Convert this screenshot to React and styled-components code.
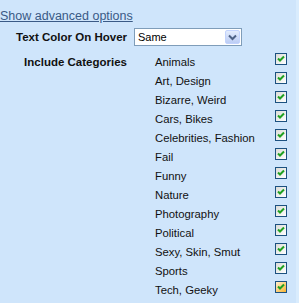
import React from 'react';
import styled, { createGlobalStyle } from 'styled-components';

const GlobalStyle = createGlobalStyle`
  html, body {
    margin: 0;
    padding: 0;
    background: #cfe5fb;
  }
  body {
    font-family: "Liberation Sans", Arial, sans-serif;
  }
`;

const Page = styled.div`
  width: 299px;
  height: 303px;
  background: #cfe5fb;
  border-right: 3px solid #d9ecfd;
  box-sizing: border-box;
  padding-top: 9px;
  overflow: hidden;
`;

const AdvancedLink = styled.a`
  display: block;
  width: fit-content;
  font-size: 12.5px;
  line-height: 14px;
  color: #3a5a86;
  text-decoration: underline;
  margin-bottom: 5px;
`;

const Form = styled.div`
  display: grid;
  grid-template-columns: 127px 1fr;
  column-gap: 7px;
  row-gap: 6px;
  align-items: start;
`;

const Label = styled.div`
  font-size: 11.5px;
  font-weight: bold;
  color: #111;
  text-align: right;
  line-height: 18px;
  padding-top: ${p => p.$top || 0}px;
`;

const Select = styled.div`
  width: 108px;
  height: 18px;
  box-sizing: border-box;
  border: 1px solid #7f9db9;
  background: #fff;
  display: flex;
  align-items: stretch;
`;

const SelectValue = styled.span`
  flex: 1;
  font-size: 11px;
  line-height: 16px;
  padding-left: 3px;
  color: #000;
`;

const SelectButton = styled.span`
  width: 15px;
  margin: 1px;
  border-radius: 2px;
  background: linear-gradient(#e3ecfd, #bccdf5);
  border: 1px solid #c3d3fd;
  box-sizing: border-box;
  display: flex;
  align-items: center;
  justify-content: center;
`;

const CategoryList = styled.div`
  display: flex;
  flex-direction: column;
  padding-left: 21px;
  padding-right: 9px;
`;

const CategoryRow = styled.label`
  display: flex;
  align-items: center;
  justify-content: space-between;
  height: 19px;
  font-size: 11.3px;
  color: #111;
`;

const Box = styled.span`
  width: 12px;
  height: 12px;
  margin-bottom: 6px;
  box-sizing: border-box;
  border: 1px solid #1c5180;
  background: ${p =>
    p.$hover
      ? 'linear-gradient(135deg, #fff0cf, #f8b330)'
      : 'linear-gradient(135deg, #dcdcd7, #ffffff)'};
  display: flex;
  align-items: center;
  justify-content: center;
`;

const Check = () => (
  <svg width="8" height="8" viewBox="0 0 8 8">
    <path d="M1 3.5 L3 5.5 L7 1.5" stroke="#21a121" strokeWidth="2" fill="none" />
  </svg>
);

const Chevron = () => (
  <svg width="9" height="7" viewBox="0 0 9 7">
    <path d="M1 1.5 L4.5 5 L8 1.5" stroke="#4d6185" strokeWidth="2" fill="none" />
  </svg>
);

const categories = [
  'Animals',
  'Art, Design',
  'Bizarre, Weird',
  'Cars, Bikes',
  'Celebrities, Fashion',
  'Fail',
  'Funny',
  'Nature',
  'Photography',
  'Political',
  'Sexy, Skin, Smut',
  'Sports',
  'Tech, Geeky',
];

const App = () => {
  return (
    <Page>
      <GlobalStyle />
      <AdvancedLink href="#">Show advanced options</AdvancedLink>
      <Form>
        <Label>Text Color On Hover</Label>
        <Select>
          <SelectValue>Same</SelectValue>
          <SelectButton><Chevron /></SelectButton>
        </Select>
        <Label $top={1}>Include Categories</Label>
        <CategoryList>
          {categories.map((c, i) => (
            <CategoryRow key={c}>
              <span>{c}</span>
              <Box $hover={i === categories.length - 1}><Check /></Box>
            </CategoryRow>
          ))}
        </CategoryList>
      </Form>
    </Page>
  );
};

export default App;
